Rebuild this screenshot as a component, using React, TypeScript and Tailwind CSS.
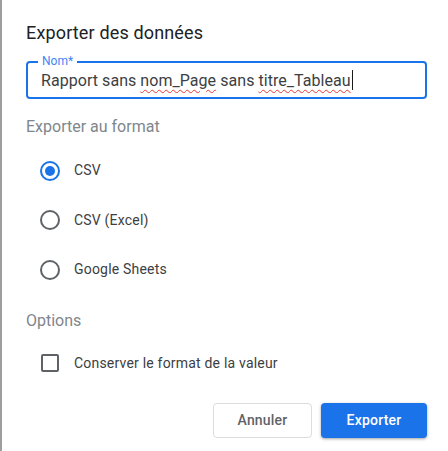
import React from "react";

const FORMATS = ["CSV", "CSV (Excel)", "Google Sheets"];

function Radio({ checked }: { checked: boolean }) {
  return (
    <div
      className={`w-5 h-5 rounded-full border-2 flex items-center justify-center ${
        checked ? "border-[#1a73e8]" : "border-[#5f6368]"
      }`}
    >
      {checked && <div className="w-2.5 h-2.5 rounded-full bg-[#1a73e8]" />}
    </div>
  );
}

export default function App() {
  return (
    <div
      className="w-[448px] h-[451px] bg-white border-l-2 border-[#9e9e9e] pl-6 pr-[21px] overflow-hidden"
      style={{ fontFamily: "Roboto, 'Liberation Sans', sans-serif" }}
    >
      <h2 className="pt-[22px] text-[18px] leading-[22px] tracking-[0.15px] text-[#202124]">Exporter des données</h2>

      {/* Name field */}
      <div className="relative mt-[17px] h-[38px] rounded border-2 border-[#1a73e8] pl-[13px] flex items-center">
        <span className="absolute -top-[9px] left-[10px] bg-white px-1 text-[12px] leading-[14px] text-[#4285f4]">
          Nom*
        </span>
        <span className="text-[16px] leading-[20px] tracking-[0.05px] text-[#3c4043] pt-[1px] whitespace-nowrap">
          Rapport sans{" "}
          <span className="underline decoration-wavy decoration-[#e53935] decoration-1 underline-offset-[3px]">nom_Page</span>{" "}
          sans{" "}
          <span className="underline decoration-wavy decoration-[#e53935] decoration-1 underline-offset-[3px]">titre_Tableau</span>
        </span>
        <span className="w-px h-[20px] bg-[#1a1a1a] ml-px" />
      </div>

      <p className="mt-[18px] text-[16px] leading-[20px] text-[#80868b]">Exporter au format</p>

      <div className="mt-[9px] flex flex-col">
        {FORMATS.map((f, i) => (
          <div key={f} className="flex items-center h-[49.5px] pl-[14px]">
            <Radio checked={i === 0} />
            <span className="ml-[14px] text-[14px] tracking-[0.2px] text-[#3c4043]">{f}</span>
          </div>
        ))}
      </div>

      <p className="mt-[16px] text-[16px] leading-[20px] text-[#80868b]">Options</p>

      <div className="mt-[22px] flex items-center pl-[15px]">
        <div className="w-[18px] h-[18px] rounded-[2px] border-2 border-[#5f6368]" />
        <span className="ml-[15px] text-[14px] tracking-[0.2px] text-[#3c4043]">Conserver le format de la valeur</span>
      </div>

      <div className="mt-[29px] flex justify-end gap-[9px]">
        <button className="w-[99px] h-[35px] rounded border border-[#dadce0] bg-white text-[14px] font-medium tracking-[0.2px] text-[#5f6368]">
          Annuler
        </button>
        <button className="w-[106px] h-[35px] rounded bg-[#1a73e8] text-[14px] font-medium tracking-[0.2px] text-white shadow-[0_1px_2px_rgba(60,64,67,0.3),0_1px_3px_1px_rgba(60,64,67,0.15)]">
          Exporter
        </button>
      </div>
    </div>
  );
}
